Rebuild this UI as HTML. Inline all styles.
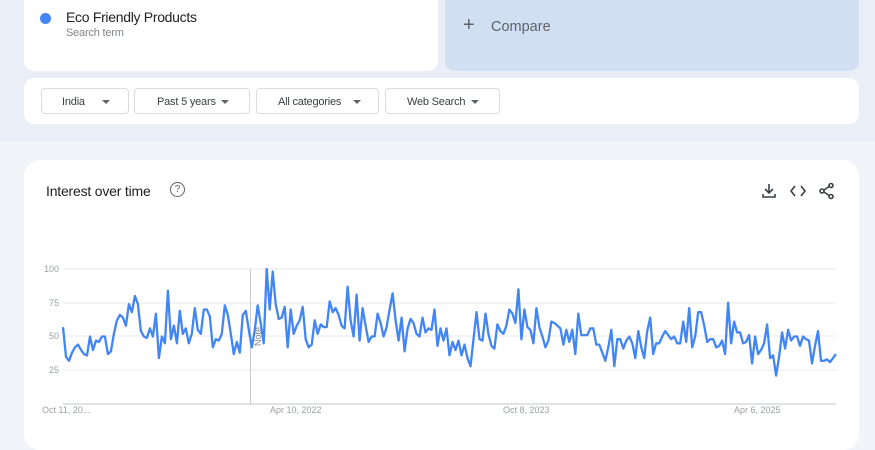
<!DOCTYPE html>
<html><head><meta charset="utf-8"><style>
body{margin:0;width:875px;height:438px;overflow:hidden;background:#f1f4f9;font-family:"Liberation Sans",sans-serif;position:relative}
.top{position:absolute;left:0;top:0;width:875px;height:141px;background:#e9eef7}
.card{position:absolute;background:#fff}
.dd{position:absolute;top:88px;height:26px;border:1px solid #dadce0;border-radius:4px;background:#fff;font-size:11px;color:#3c4043;line-height:26px;box-sizing:border-box;letter-spacing:-0.2px}
.dd span{position:absolute;top:0}
.dd i{position:absolute;top:11px;width:0;height:0;border-left:4px solid transparent;border-right:4px solid transparent;border-top:4px solid #5f6368}
</style></head><body>
<div class="top"></div>
<div class="card" style="left:24px;top:-10px;width:414px;height:81px;border-radius:10px">
  <div style="position:absolute;left:16px;top:23px;width:11px;height:11px;border-radius:50%;background:#4285f4"></div>
  <div style="position:absolute;left:42px;top:19px;font-size:14px;color:#202124;letter-spacing:-0.3px">Eco Friendly Products</div>
  <div style="position:absolute;left:42px;top:37px;font-size:11px;color:#80868b;letter-spacing:-0.2px">Search term</div>
</div>
<div style="position:absolute;left:445px;top:-10px;width:414px;height:81px;border-radius:10px;background:#d1dff3">
  <div style="position:absolute;left:18px;top:24px;font-size:20px;color:#5f6368;font-weight:300">+</div>
  <div style="position:absolute;left:46px;top:29px;font-size:14.5px;color:#5f6368">Compare</div>
</div>
<div class="card" style="left:24px;top:78px;width:835px;height:46px;border-radius:10px"></div>
<div class="dd" style="left:41px;width:88px"><span style="left:20px">India</span><i style="left:60px"></i></div>
<div class="dd" style="left:134px;width:116px"><span style="left:22px">Past 5 years</span><i style="left:86px"></i></div>
<div class="dd" style="left:256px;width:123px"><span style="left:21px">All categories</span><i style="left:96px"></i></div>
<div class="dd" style="left:385px;width:115px"><span style="left:21px">Web Search</span><i style="left:85px"></i></div>
<div class="card" style="left:24px;top:160px;width:835px;height:290px;border-radius:16px">
  <div style="position:absolute;left:22px;top:23px;font-size:14px;color:#202124;letter-spacing:-0.2px">Interest over time</div>
  <div style="position:absolute;left:146px;top:22px;width:13px;height:13px;border:1.3px solid #5f6368;border-radius:50%;font-size:10px;line-height:13px;text-align:center;color:#5f6368">?</div>
  <svg style="position:absolute;left:736px;top:22px" width="80" height="18" viewBox="0 0 80 18" fill="none" stroke="#3c4043" stroke-width="1.6">
    <path d="M9 2v9M5 7l4 4 4-4M3 12v3h12v-3"/>
    <path d="M35 4l-4 5 4 5M41 4l4 5-4 5"/>
    <circle cx="71" cy="3.5" r="2"/><circle cx="62" cy="9" r="2"/><circle cx="71" cy="14.5" r="2"/><path d="M64 8l5-3.5M64 10l5 3.5"/>
  </svg>
</div>
<svg id="ch" style="position:absolute;left:0;top:0" width="875" height="438">
  <g stroke="#e8eaed" stroke-width="1">
    <line x1="63" y1="269" x2="836" y2="269"/><line x1="63" y1="303" x2="836" y2="303"/>
    <line x1="63" y1="336" x2="836" y2="336"/><line x1="63" y1="370" x2="836" y2="370"/>
  </g>
  <line x1="63" y1="404" x2="836" y2="404" stroke="#c4c7cc"/>
  <line x1="250.5" y1="269" x2="250.5" y2="404" stroke="#c8cacd"/>
  <text x="0" y="0" transform="translate(261,346) rotate(-90)" font-size="9" fill="#80868b" font-family="Liberation Sans">Note</text>
  <g font-size="9" fill="#9aa0a6" font-family="Liberation Sans">
    <text x="59" y="272" text-anchor="end">100</text><text x="59" y="306" text-anchor="end">75</text>
    <text x="59" y="339" text-anchor="end">50</text><text x="59" y="373" text-anchor="end">25</text>
    <text x="42" y="413">Oct 11, 20...</text><text x="270" y="413">Apr 10, 2022</text>
    <text x="503" y="413">Oct 8, 2023</text><text x="734" y="413">Apr 6, 2025</text>
  </g>
  <polyline id="pl" fill="none" stroke="#4285f4" stroke-width="2.3" stroke-linejoin="round" points=""/>
</svg>
<script>
var v=[57,35,32,38,42,44,40,37,36,50,40,47,46,50,50,37,39,52,62,66,64,58,74,68,80,74,54,50,49,56,50,67,34,50,45,84,48,58,45,69,52,56,45,52,71,55,52,70,70,65,42,48,47,52,73,66,52,37,46,38,66,69,55,42,55,73,60,45,100,70,98,74,63,64,72,42,70,52,58,62,72,48,42,44,62,52,59,57,57,76,68,71,66,58,56,87,62,50,81,47,71,58,46,50,50,67,60,50,57,70,82,62,47,64,39,56,63,60,52,50,64,53,56,55,70,43,56,47,56,36,46,40,47,36,44,34,28,48,68,48,47,67,52,43,41,59,54,52,58,70,67,60,85,48,70,57,55,45,71,57,50,42,47,61,60,58,56,44,55,46,55,37,67,51,51,51,56,56,44,44,38,32,42,55,28,48,48,41,47,50,45,34,54,42,34,54,64,37,45,45,50,54,51,48,50,45,45,61,46,71,42,50,68,68,58,46,48,48,42,43,47,37,75,45,61,53,53,45,46,51,30,50,37,40,45,59,34,36,21,35,53,41,55,47,50,50,43,50,48,47,30,43,54,32,32,33,31,34,37];
var n=v.length,s="";for(var i=0;i<n;i++){var x=63+i*(773/(n-1));var y=404-v[i]*1.35;s+=x.toFixed(1)+","+y.toFixed(1)+" ";}
document.getElementById("pl").setAttribute("points",s);
</script>
</body></html>
